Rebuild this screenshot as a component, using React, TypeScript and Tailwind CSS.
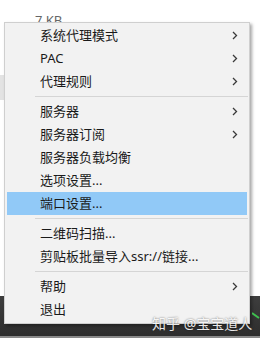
import React from "react";

type Item = { label: string; sub?: boolean; active?: boolean } | { sep: true };

const items: Item[] = [
  { label: "系统代理模式", sub: true },
  { label: "PAC", sub: true },
  { label: "代理规则", sub: true },
  { sep: true },
  { label: "服务器", sub: true },
  { label: "服务器订阅", sub: true },
  { label: "服务器负载均衡" },
  { label: "选项设置..." },
  { label: "端口设置...", active: true },
  { sep: true },
  { label: "二维码扫描..." },
  { label: "剪贴板批量导入ssr://链接..." },
  { sep: true },
  { label: "帮助", sub: true },
  { label: "退出" },
];

function Chevron() {
  return (
    <svg width="6" height="9" viewBox="0 0 6 9" className="block">
      <path d="M1 1 L4.5 4.5 L1 8" fill="none" stroke="#3a3a3a" strokeWidth="1.3" />
    </svg>
  );
}

export default function App() {
  return (
    <div
      className="relative w-[260px] h-[344px] overflow-hidden bg-white"
      style={{ fontFamily: '"Noto Sans", "Noto Sans CJK SC", sans-serif' }}
    >
      {/* desktop / window background */}
      <div className="flex flex-col h-full">
        <div className="h-[75px] pl-[35px] pt-[14px] text-[13px] text-[#666] leading-none">7 KB</div>
        <div className="h-[25px] flex">
          <div className="w-[4px] bg-[#e3e3e3]" />
        </div>
        <div className="flex-1" />
        <div className="h-[40px] bg-gradient-to-b from-[#3e3e3e] to-[#2e2e2e]" />
        <div className="h-[2px] bg-[#8a8a8a]" />
        <div className="h-[6px] bg-white" />
      </div>

      {/* context menu */}
      <div className="absolute left-[4px] top-[22px] w-[246px] bg-[#f2f2f2] border border-[#cfcfcf] pt-[1px] pb-[2px] shadow-[2px_2px_3px_rgba(0,0,0,0.35)] text-[13px] text-[#1a1a1a]">
        {items.map((it, i) =>
          "sep" in it ? (
            <div key={i} className="h-[7px] flex items-center pl-[30px] pr-[1px]">
              <div className="h-px w-full bg-[#d5d5d5]" />
            </div>
          ) : (
            <div
              key={i}
              className={
                "mx-[2px] h-[23px] flex items-center justify-between pl-[33px] pr-[9px] " +
                (it.active ? "bg-[#91c9f7]" : "")
              }
            >
              <span className="leading-none">{it.label}</span>
              {it.sub ? <Chevron /> : null}
            </div>
          )
        )}
      </div>

      {/* green tray mark */}
      <svg className="absolute left-[252px] top-[312px]" width="8" height="8" viewBox="0 0 8 8">
        <path d="M0 1 L7 6" stroke="#3fbf4f" strokeWidth="2" />
      </svg>

      {/* watermark */}
      <div className="absolute left-[152px] top-[317px] text-[14px] leading-none text-white/90 [text-shadow:0_0_2px_rgba(0,0,0,0.6)] whitespace-nowrap">
        知乎 @宝宝道人
      </div>
    </div>
  );
}
